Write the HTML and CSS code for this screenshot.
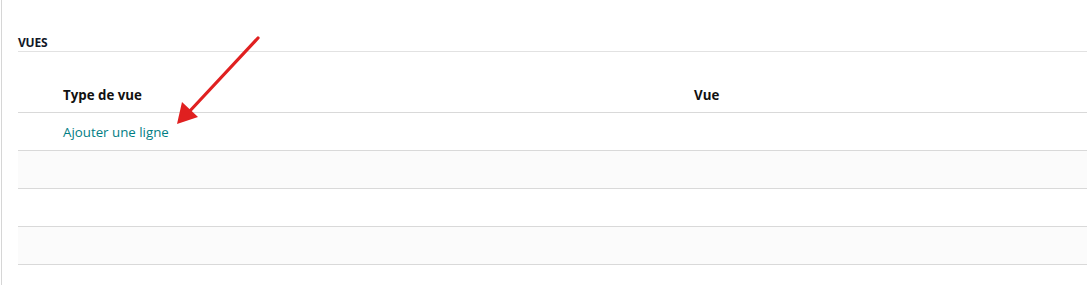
FILE: index.html
```html
<!DOCTYPE html>
<html lang="fr">
<head>
<meta charset="utf-8">
<link rel="stylesheet" href="styles.css">
</head>
<body>
<div class="sheet">
  <div class="section">
    <div class="section-title">VUES</div>
    <div class="table">
      <div class="row head">
        <div class="cell c1">Type de vue</div>
        <div class="cell c2">Vue</div>
      </div>
      <div class="row">
        <div class="cell c1"><a class="add" href="#">Ajouter une ligne</a></div>
        <div class="cell c2"></div>
      </div>
      <div class="row alt"></div>
      <div class="row"></div>
      <div class="row alt"></div>
    </div>
  </div>
  <svg class="arrow" width="1087" height="285" viewBox="0 0 1087 285">
    <line x1="256" y1="38" x2="186" y2="113" stroke="#e02020" stroke-width="3.2" stroke-linecap="round"/>
    <polygon points="175,124 180,102 196,117" fill="#e02020"/>
  </svg>
</div>
</body>
</html>
```
FILE: styles.css
```css
html, body {
  margin: 0;
  padding: 0;
  background: #fff;
}
body {
  font-family: "Open Sans", "Noto Sans", "Liberation Sans", sans-serif;
  color: #111;
}
.sheet {
  position: relative;
  margin-left: 1px;
  border-left: 1px solid #d6d6d6;
  height: 285px;
  box-sizing: border-box;
  overflow: hidden;
}
.section {
  padding-left: 16px;
  padding-top: 34px;
}
.section-title {
  font-size: 12px;
  font-weight: 700;
  letter-spacing: -0.2px;
  line-height: 17px;
  border-bottom: 1px solid #e2e2e2;
  color: #111827;
}
.table {
  margin-top: 24px;
}
.row {
  display: flex;
  height: 37px;
  border-bottom: 1px solid #d9d9d9;
  align-items: center;
}
.row.head {
  height: 37px;
  font-weight: 700;
  padding-top: 2px;
  box-sizing: border-box;
}
.row.alt {
  background: #fbfbfb;
}
.cell {
  font-size: 13.3px;
}
.c1 {
  width: 676px;
  padding-left: 45px;
  box-sizing: border-box;
}
.c2 {
  flex: 1;
}
.add {
  color: #017e84;
  text-decoration: none;
}
.arrow {
  position: absolute;
  left: 0;
  top: 0;
  pointer-events: none;
}
```
